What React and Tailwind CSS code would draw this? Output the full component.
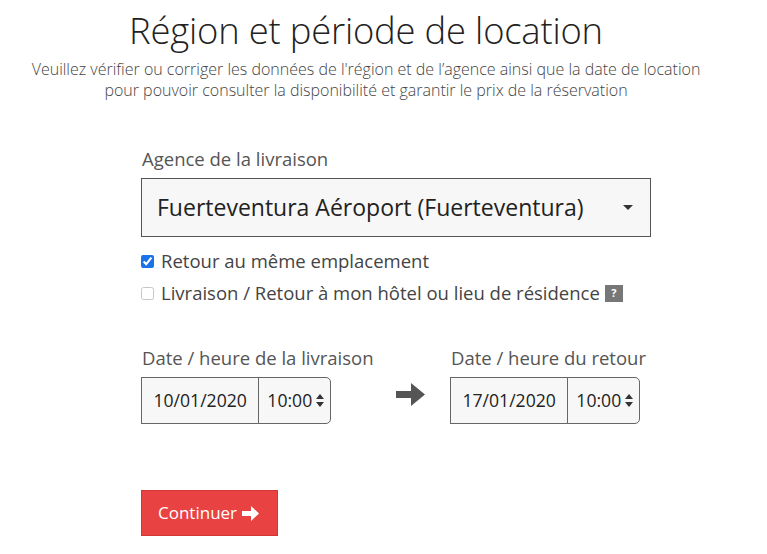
import { useState } from "react";

const font = { fontFamily: '"Open Sans", "Liberation Sans", sans-serif' };

function TimeSelect({ value }) {
  return (
    <div className="flex items-center h-[47px] w-[73px] border border-[#666] rounded-r-[5px] bg-[#f7f7f7] pl-[8px] -ml-px">
      <span className="text-[17.6px] text-[#222]">{value}</span>
      <svg width="8" height="13" viewBox="0 0 8 13" className="ml-[4px]">
        <path d="M4 0 L8 5 L0 5 Z" fill="#333" />
        <path d="M0 8 L8 8 L4 13 Z" fill="#333" />
      </svg>
    </div>
  );
}

function DateField({ label, date, time }) {
  return (
    <div className="flex flex-col w-[190px]">
      <span className="text-[18.5px] text-[#555] leading-none ml-px whitespace-nowrap">{label}</span>
      <div className="flex mt-[10px]">
        <div className="flex items-center justify-center h-[47px] w-[119px] border border-[#666] bg-[#f7f7f7] text-[17.6px] text-[#222]">
          {date}
        </div>
        <TimeSelect value={time} />
      </div>
    </div>
  );
}

export default function App() {
  const [sameLocation, setSameLocation] = useState(true);
  const [hotel, setHotel] = useState(false);

  return (
    <div className="w-[767px] h-[554px] bg-white overflow-hidden" style={font}>
      {/* ── Header ── */}
      <div className="flex flex-col items-center pt-[6px] pr-[35px]">
        <h1 className="text-[36.4px] font-light text-[#222] leading-[48px] tracking-[-0.2px]">
          Région et période de location
        </h1>
        <p className="text-[16px] font-light text-[#444] text-center leading-[21px] mt-[5px]">
          Veuillez vérifier ou corriger les données de l'région et de l’agence ainsi que la date de location
          <br />
          pour pouvoir consulter la disponibilité et garantir le prix de la réservation
        </p>
      </div>

      {/* ── Form ── */}
      <div className="ml-[141px] w-[510px] mt-[49px]">
        <span className="block text-[18.5px] text-[#555] leading-none ml-px">Agence de la livraison</span>
        <div className="flex items-center justify-between h-[59px] mt-[9px] border border-[#555] bg-[#f7f7f7] pl-[15px] pr-[17px]">
          <span className="text-[23px] text-[#222]">Fuerteventura Aéroport (Fuerteventura)</span>
          <svg width="10" height="5" viewBox="0 0 10 5">
            <path d="M0 0 L10 0 L5 5 Z" fill="#333" />
          </svg>
        </div>

        <label className="flex items-center mt-[14px] h-[21px]">
          <input
            type="checkbox"
            checked={sameLocation}
            onChange={(e) => setSameLocation(e.target.checked)}
            className="w-[13px] h-[13px] m-0 accent-[#1a73e8]"
          />
          <span className="ml-[7px] text-[18.5px] text-[#444]">Retour au même emplacement</span>
        </label>
        <label className="flex items-center mt-[11px] h-[21px]">
          <input
            type="checkbox"
            checked={hotel}
            onChange={(e) => setHotel(e.target.checked)}
            className="w-[13px] h-[13px] m-0 opacity-40"
          />
          <span className="ml-[7px] text-[18.5px] text-[#444]">Livraison / Retour à mon hôtel ou lieu de résidence</span>
          <span className="ml-[5px] w-[18px] h-[17px] bg-[#777] text-white text-[11px] font-bold flex items-center justify-center">?</span>
        </label>

        <div className="flex items-end mt-[45px]">
          <DateField label="Date / heure de la livraison" date="10/01/2020" time="10:00" />
          <div className="w-[119px] h-[47px] flex items-start justify-end pt-[6px] pr-[25px]">
            <svg width="29" height="23" viewBox="0 0 29 23">
              <path d="M0 8 H15 V0 L29 11.5 L15 23 V15 H0 Z" fill="#555" />
            </svg>
          </div>
          <DateField label="Date / heure du retour" date="17/01/2020" time="10:00" />
        </div>

        <button className="mt-[66px] flex items-center h-[46px] w-[137px] bg-[#e94242] border border-[#d43535] pl-[16px] text-white text-[17px]">
          Continuer
          <svg width="17" height="15" viewBox="0 0 17 15" className="ml-[5px]">
            <path d="M0 5 H9 V0 L17 7.5 L9 15 V10 H0 Z" fill="#fff" />
          </svg>
        </button>
      </div>
    </div>
  );
}
